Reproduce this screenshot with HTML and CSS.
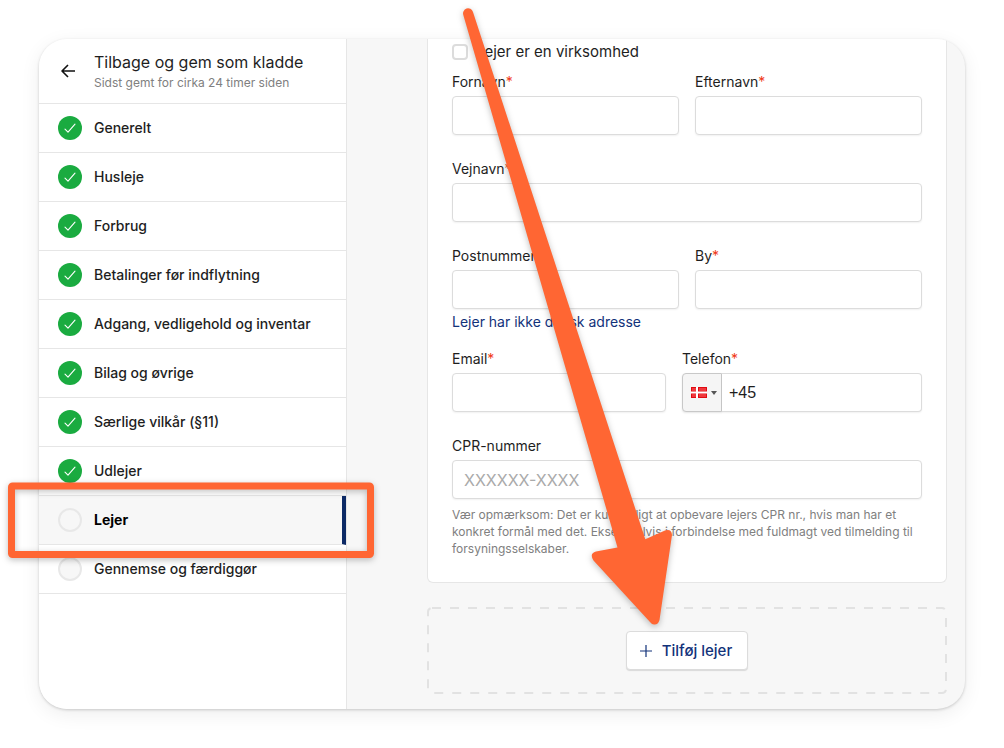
FILE: index.html
```html
<!DOCTYPE html>
<html lang="da">
	<head>
		<meta charset="utf-8" />
		<title>Lejer</title>
		<meta name="viewport" content="width=device-width, initial-scale=1" />
		<link rel="stylesheet" href="styles.css">
	</head>

	<body>
		<svg class="defs" width="0" height="0" aria-hidden="true">
			<symbol id="check" viewBox="0 0 24 24">
				<path d="M7 13.200l3 2.900 7-8" fill="none" stroke="#fff" stroke-width="1.1" stroke-linecap="round" stroke-linejoin="round" />
			</symbol>
		</svg>

		<div class="window">
			<aside class="sidebar">
				<a class="back" href="#">
					<svg class="back-icon" width="16" height="16" viewBox="0 0 16 16" aria-hidden="true">
						<path d="M15 8H2M8 2L2 8l6 6" fill="none" stroke="#111" stroke-width="1.6" stroke-linejoin="round" />
					</svg>
					<span class="back-text">
						<span class="back-title">Tilbage og gem som kladde</span>
						<span class="back-note">Sidst gemt for cirka 24 timer siden</span>
					</span>
				</a>
				<nav class="steps">
					<a class="step" href="#"><svg class="dot done"><use href="#check" /></svg>Generelt</a>
					<a class="step" href="#"><svg class="dot done"><use href="#check" /></svg>Husleje</a>
					<a class="step" href="#"><svg class="dot done"><use href="#check" /></svg>Forbrug</a>
					<a class="step" href="#"><svg class="dot done"><use href="#check" /></svg>Betalinger før indflytning</a>
					<a class="step" href="#"><svg class="dot done"><use href="#check" /></svg>Adgang, vedligehold og inventar</a>
					<a class="step" href="#"><svg class="dot done"><use href="#check" /></svg>Bilag og øvrige</a>
					<a class="step" href="#"><svg class="dot done"><use href="#check" /></svg>Særlige vilkår (§11)</a>
					<a class="step" href="#"><svg class="dot done"><use href="#check" /></svg>Udlejer</a>
					<a class="step current" href="#" aria-current="step"><span class="dot"></span>Lejer</a>
					<a class="step" href="#"><span class="dot"></span>Gennemse og færdiggør</a>
				</nav>
			</aside>

			<main class="main">
				<form class="card">
					<label class="company"><input type="checkbox" class="tick" />Lejer er en virksomhed</label>

					<div class="row">
						<div class="field">
							<label for="fornavn">Fornavn<span class="req">*</span></label>
							<input type="text" id="fornavn" />
						</div>
						<div class="field">
							<label for="efternavn">Efternavn<span class="req">*</span></label>
							<input type="text" id="efternavn" />
						</div>
					</div>

					<div class="row">
						<div class="field">
							<label for="vejnavn">Vejnavn<span class="req">*</span></label>
							<input type="text" id="vejnavn" />
						</div>
					</div>

					<div class="row with-link">
						<div class="field">
							<label for="postnummer">Postnummer<span class="req">*</span></label>
							<input type="text" id="postnummer" />
						</div>
						<div class="field">
							<label for="by">By<span class="req">*</span></label>
							<input type="text" id="by" />
						</div>
					</div>
					<a class="address-link" href="#">Lejer har ikke dansk adresse</a>

					<div class="row">
						<div class="field">
							<label for="email">Email<span class="req">*</span></label>
							<input type="email" id="email" />
						</div>
						<div class="field phone">
							<label for="telefon">Telefon<span class="req">*</span></label>
							<div class="phone-box">
								<button type="button" class="country" aria-label="Danmark">
									<svg width="16" height="11" viewBox="0 0 16 11" aria-hidden="true">
										<rect width="16" height="11" fill="#e00b12" />
										<path d="M1 1h4v3H1zM8 1h7v3H8zM1 7h4v3H1zM8 7h7v3H8z" fill="#f0383d" />
										<path d="M6 0v11M0 5.500h16" stroke="#fff" stroke-width="2" />
									</svg>
									<span class="caret"></span>
								</button>
								<input type="tel" id="telefon" value="+45" />
							</div>
						</div>
					</div>

					<div class="field">
						<label for="cpr">CPR-nummer</label>
						<input type="text" id="cpr" placeholder="XXXXXX-XXXX" />
					</div>
					<p class="help">Vær opmærksom: Det er kun lovligt at opbevare lejers CPR nr., hvis man har et konkret formål med det. Eksempelvis i forbindelse med fuldmagt ved tilmelding til forsyningsselskaber.</p>
				</form>

				<div class="add">
					<svg class="add-frame" aria-hidden="true">
						<rect x="1" y="1" rx="4" />
					</svg>
					<button type="button" class="add-button">
						<svg width="12" height="12" viewBox="0 0 12 12" aria-hidden="true">
							<path d="M6 0v12M0 6h12" stroke="#12327a" stroke-width="1.2" />
						</svg>
						Tilføj lejer
					</button>
				</div>
			</main>
		</div>

		<!-- guide arrow and frame on top of the page -->
		<svg class="guide" width="1004" height="748" viewBox="0 0 1004 748" aria-hidden="true">
			<rect x="11.500" y="486" width="359" height="68.500" rx="1" fill="none" stroke="#ff6633" stroke-width="7" />
			<path fill="#ff6633" d="M463.300 15A5 5 0 0 1 472.900 11.800L645.300 539.300 665 530.500Q671.500 528.500 672 535L659.500 620Q658 625 654 624.500 652 624.500 650 622L593.500 560.500Q589 553.500 596 551.500L617.500 547.500Z" />
		</svg>
	</body>
</html>
```
FILE: styles.css
```css
* {
  box-sizing: border-box;
}
body {
  position: relative;
  margin: 0;
  padding: 39px;
  background: #fff;
  color: #1e1e1e;
  font-family: Inter, "Liberation Sans", sans-serif;
  font-size: 14px;
  line-height: 20px;
}
a {
  color: inherit;
  text-decoration: none;
}
input,
button {
  font: inherit;
  color: inherit;
}
.defs {
  position: absolute;
}
.window {
  display: flex;
  border-radius: 28px;
  overflow: hidden;
  background: #f7f7f7;
  box-shadow: 0 1px 3px rgba(0, 0, 0, 0.18), 0 5px 20px rgba(0, 0, 0, 0.07);
}

/* sidebar */
.sidebar {
  flex: 0 0 308px;
  background: #fff;
  border-right: 1px solid #e6e6e6;
}
.back {
  display: flex;
  align-items: center;
  gap: 18px;
  height: 65px;
  padding-left: 21px;
  border-bottom: 1px solid #e6e6e6;
}
.back-text {
  display: flex;
  flex-direction: column;
  padding-top: 2px;
}
.back-title {
  font-size: 16px;
  line-height: 22px;
}
.back-note {
  font-size: 12px;
  line-height: 20px;
  color: #808080;
}
.step {
  display: flex;
  align-items: center;
  gap: 12px;
  height: 49px;
  padding-left: 19px;
  border-bottom: 1px solid #e6e6e6;
  font-weight: 500;
}
.dot {
  width: 24px;
  height: 24px;
  border: 2px solid #e8e8e8;
  border-radius: 50%;
  background: #f7f7f7;
}
.dot.done {
  border: 0;
  background: #1aab40;
}
.current {
  background: #f7f7f7;
  border-right: 4px solid #0d2a66;
  color: #000;
  font-weight: 700;
}

/* form */
.main {
  flex: 1;
  padding: 0 18px 15px 80px;
}
.card {
  padding: 1px 24px 25px;
  border: 1px solid #e6e6e6;
  border-top: 0;
  border-radius: 0 0 6px 6px;
  background: #fff;
}
.company {
  display: flex;
  align-items: center;
  gap: 8px;
  margin-bottom: 8px;
  font-size: 15px;
  line-height: 24px;
}
.tick {
  appearance: none;
  width: 16px;
  height: 16px;
  margin: 0;
  border: 2px solid #dcdcdc;
  border-radius: 4px;
  background: #fff;
}
.row {
  display: flex;
  gap: 16px;
  margin-bottom: 24px;
}
.with-link {
  margin-bottom: 3px;
}
.field {
  flex: 1;
  min-width: 0;
}
.field label {
  display: block;
  margin-bottom: 4px;
}
.field input {
  display: block;
  width: 100%;
  height: 39px;
  padding: 0 11px;
  border: 1px solid #dcdcdc;
  border-radius: 4px;
  background: #fff;
  box-shadow: 0 1px 2px rgba(0, 0, 0, 0.06);
  font-size: 16px;
}
.field input::placeholder {
  color: #aaa;
}
.req {
  color: #f03a17;
}
.address-link {
  display: block;
  margin-bottom: 17px;
  color: #12327a;
}
.phone {
  flex: 0 0 240px;
}
.phone-box {
  display: flex;
}
.country {
  display: flex;
  flex: 0 0 40px;
  align-items: center;
  gap: 4px;
  padding: 0 0 0 8px;
  border: 1px solid #c8c8c8;
  border-radius: 4px 0 0 4px;
  background: #f5f5f5;
  box-shadow: 0 1px 2px rgba(0, 0, 0, 0.1);
}
.caret {
  border: 3px solid transparent;
  border-top: 4px solid #555;
  border-bottom: 0;
}
.phone-box input {
  flex: 1;
  padding: 0 7px;
  border-left: 0;
  border-radius: 0 4px 4px 0;
  font-family: "Liberation Sans", sans-serif;
}
.help {
  margin: 7px 0 0;
  font-size: 12px;
  line-height: 17px;
  color: #808080;
}

/* add tenant */
.add {
  position: relative;
  display: flex;
  justify-content: center;
  margin-top: 24px;
  padding: 24px;
}
.add-frame {
  position: absolute;
  inset: 0;
  width: 100%;
  height: 100%;
}
.add-frame rect {
  width: calc(100% - 2px);
  height: calc(100% - 2px);
  fill: none;
  stroke: #e2e2e2;
  stroke-width: 2px;
  stroke-dasharray: 9 9;
}
.add-button {
  position: relative;
  display: flex;
  align-items: center;
  gap: 10px;
  height: 39px;
  padding: 0 15px 0 13px;
  border: 1px solid #dcdcdc;
  border-radius: 4px;
  background: #fff;
  box-shadow: 0 1px 1px rgba(0, 0, 0, 0.12);
  color: #12327a;
  font-size: 15px;
  font-weight: 500;
}

.guide {
  position: absolute;
  top: 0;
  left: 0;
  pointer-events: none;
  filter: drop-shadow(0 2px 3px rgba(0, 0, 0, 0.25));
}
```
